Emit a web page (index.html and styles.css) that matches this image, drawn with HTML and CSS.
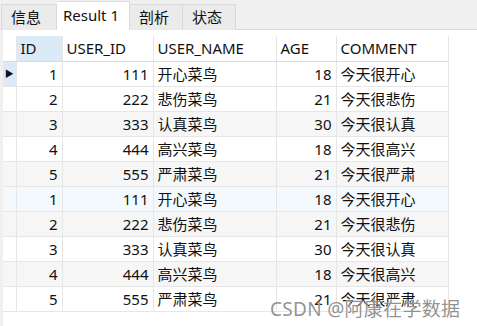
FILE: index.html
```html
<!DOCTYPE html>
<html lang="zh">
<head>
    <meta charset="UTF-8">
    <title>Result 1</title>
    <link rel="stylesheet" href="styles.css">
</head>
<body>
    <div class="tabs">
        <div class="tab">信息</div>
        <div class="tab activa">Result 1</div>
        <div class="tab">剖析</div>
        <div class="tab">状态</div>
    </div>
    <div class="cuerpo">
        <div class="margen"></div>
        <table class="rejilla">
            <thead>
                <tr>
                    <th class="indicador"></th>
                    <th class="c-id sel">ID</th>
                    <th class="c-uid">USER_ID</th>
                    <th class="c-name">USER_NAME</th>
                    <th class="c-age">AGE</th>
                    <th class="c-com">COMMENT</th>
                </tr>
            </thead>
            <tbody>
                <tr class="actual"><td class="indicador sel">&#9654;</td><td class="num">1</td><td class="num">111</td><td>开心菜鸟</td><td class="num">18</td><td>今天很开心</td></tr>
                <tr><td class="indicador"></td><td class="num">2</td><td class="num">222</td><td>悲伤菜鸟</td><td class="num">21</td><td>今天很悲伤</td></tr>
                <tr class="alt"><td class="indicador"></td><td class="num">3</td><td class="num">333</td><td>认真菜鸟</td><td class="num">30</td><td>今天很认真</td></tr>
                <tr><td class="indicador"></td><td class="num">4</td><td class="num">444</td><td>高兴菜鸟</td><td class="num">18</td><td>今天很高兴</td></tr>
                <tr class="alt"><td class="indicador"></td><td class="num">5</td><td class="num">555</td><td>严肃菜鸟</td><td class="num">21</td><td>今天很严肃</td></tr>
                <tr class="hover"><td class="indicador"></td><td class="num">1</td><td class="num">111</td><td>开心菜鸟</td><td class="num">18</td><td>今天很开心</td></tr>
                <tr class="alt"><td class="indicador"></td><td class="num">2</td><td class="num">222</td><td>悲伤菜鸟</td><td class="num">21</td><td>今天很悲伤</td></tr>
                <tr><td class="indicador"></td><td class="num">3</td><td class="num">333</td><td>认真菜鸟</td><td class="num">30</td><td>今天很认真</td></tr>
                <tr class="alt"><td class="indicador"></td><td class="num">4</td><td class="num">444</td><td>高兴菜鸟</td><td class="num">18</td><td>今天很高兴</td></tr>
                <tr><td class="indicador"></td><td class="num">5</td><td class="num">555</td><td>严肃菜鸟</td><td class="num">21</td><td>今天很严肃</td></tr>
            </tbody>
        </table>
        <div class="marca">CSDN @阿康在学数据</div>
    </div>
</body>
</html>
```

FILE: styles.css
```css
body {
    margin: 0;
    background: #ffffff;
    font-family: 'Noto Sans', 'Noto Sans CJK SC', sans-serif;
    font-size: 15px;
    color: #111;
}

.tabs {
    display: flex;
    align-items: flex-end;
    height: 30px;
    background: #f0f0f0;
    border-bottom: 1px solid #dcdcdc;
    box-sizing: border-box;
    padding-left: 1px;
}

.tab {
    height: 26px;
    line-height: 25px;
    padding: 0 9px;
    background: #ebebeb;
    border: 1px solid #d9d9d9;
    border-bottom: none;
    border-left: none;
    margin-bottom: -1px;
    box-sizing: border-box;
}

.tab:first-child {
    border-left: 1px solid #d9d9d9;
    width: 56px;
}

.tab.activa {
    height: 29px;
    line-height: 27px;
    background: #fff;
    width: 73px;
    padding: 0 6px;
    border-color: #dcdcdc;
}

.tab:nth-child(3),
.tab:nth-child(4) {
    width: 53px;
}

.cuerpo {
    position: relative;
    display: flex;
    height: 296px;
}

.margen {
    width: 3px;
    background: #f0f0f0;
}

.rejilla {
    border-collapse: collapse;
    margin-top: 6px;
    align-self: flex-start;
    table-layout: fixed;
}

.rejilla th,
.rejilla td {
    height: 25px;
    padding: 0 4px;
    border: 1px solid #e6e6e6;
    white-space: nowrap;
    box-sizing: border-box;
    line-height: 20px;
}

.rejilla th {
    font-weight: normal;
    text-align: left;
    border-bottom-color: #dadada;
}

.rejilla tr:first-child th {
    border-top: none;
}

.indicador {
    width: 13px;
    border-left: none !important;
    padding: 0 !important;
    font-size: 9px;
    text-align: center;
    color: #111;
}

.c-id { width: 46px; }
.c-uid { width: 91px; }
.c-name { width: 123px; }
.c-age { width: 60px; }
.c-com { width: 112px; }

.rejilla th.sel,
.rejilla td.sel {
    background: #dceaf7;
}

.num {
    text-align: right;
}

.alt td {
    background: #f6f6f6;
}

.hover td {
    background: #f4f9fe;
}

.marca {
    position: absolute;
    left: 270px;
    top: 264px;
    font-size: 19px;
    color: rgba(110, 110, 110, 0.75);
    letter-spacing: 0.3px;
    text-shadow: 0 0 1px #fff;
}
```
